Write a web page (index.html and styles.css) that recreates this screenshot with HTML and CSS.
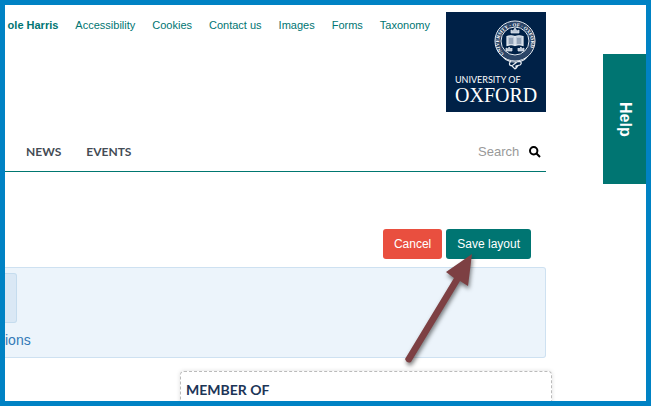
FILE: index.html
```html
<!DOCTYPE html>
<html lang="en">
<head>
<meta charset="utf-8">
<title>University of Oxford</title>
<link rel="stylesheet" href="styles.css">
</head>
<body>
<div class="frame">
  <div class="page">
    <header class="top">
      <nav class="links">
        <a class="user" href="#">ole Harris</a>
        <a href="#">Accessibility</a>
        <a href="#">Cookies</a>
        <a href="#">Contact us</a>
        <a href="#">Images</a>
        <a href="#">Forms</a>
        <a href="#">Taxonomy</a>
      </nav>
      <a class="logo" href="#">
        <svg class="crest" viewBox="0 0 44 54" aria-hidden="true">
          <defs><path id="ring" d="M11 36A16 16 0 1 1 33 36"/></defs>
          <circle cx="22" cy="23" r="17" fill="none" stroke="#2c4668" stroke-width="5"/>
          <g fill="none" stroke="#e8edf3">
            <circle cx="22" cy="23" r="20" stroke-width="1"/>
            <circle cx="22" cy="23" r="14" stroke-width="1"/>
            <path d="M10 39c3 4 7 5 12 5s9-1 12-5M18 43c-3 3-1 6 2 4l4-3c3-2 6 1 3 3l-4 1v3M19 48l3 3 3-3" stroke-width="1.200"/>
            <path d="M14 18.500q4-1.500 8 0 4-1.500 8 0v9q-4-1.500-8 0-4-1.500-8 0zM22 18.500v9" fill="#bcc8d7" stroke-width="1.200"/>
            <path d="M16 21h4M16 23h4M16 25h4M24 21h4M24 23h4M24 25h4" stroke="#4a6383" stroke-width=".7"/>
            <path d="M18 15v-3l2 1 2-3 2 3 2-1v3zM13 33v-3l2 1 1-2 2 2 1-1v3zM25 33v-3l1 1 2-2 1 2 2-1v3z" fill="#bcc8d7" stroke-width=".7"/>
          </g>
          <text class="motto"><textPath href="#ring">UNIVERSITY · OF · OXFORD</textPath></text>
        </svg>
        <span class="logo-small">UNIVERSITY OF</span>
        <span class="logo-large">OXFORD</span>
      </a>
    </header>

    <div class="menu">
      <nav class="sections">
        <a href="#">NEWS</a>
        <a href="#">EVENTS</a>
      </nav>
      <form class="search">
        <input type="text" placeholder="Search" aria-label="Search">
        <button type="button" aria-label="Submit search">
          <svg viewBox="0 0 12 12" aria-hidden="true"><circle cx="4.700" cy="4.700" r="3.700"/><path d="M7.500 7.500l3.500 3.500"/></svg>
        </button>
      </form>
    </div>

    <main>
      <div class="actions">
        <button class="btn cancel" type="button">Cancel</button>
        <button class="btn save" type="button">Save layout</button>
      </div>
      <section class="panel">
        <div class="tile"></div>
        <a href="#">ions</a>
      </section>
      <section class="member">
        <h2>MEMBER OF</h2>
      </section>
    </main>
  </div>

  <button class="help" type="button">Help</button>
  <svg class="arrow" viewBox="0 0 80 120" aria-hidden="true">
    <path d="M72 5L68 37L60 32L11 113Q7 115 5 110L54 29L46 23Z"/>
  </svg>
</div>
</body>
</html>
```
FILE: styles.css
```css
* {
  box-sizing: border-box;
}

body {
  margin: 0;
  background: #fff;
  font-family: "Liberation Sans", Arial, sans-serif;
}

a {
  color: #007572;
  text-decoration: none;
}

button {
  border: 0;
  font-family: inherit;
  cursor: pointer;
}

.frame {
  position: relative;
  height: 100vh;
  overflow: hidden;
  border: 5px solid #0082c4;
}

.page {
  padding: 7px 100px 0 0;
}

.top {
  display: flex;
  justify-content: flex-end;
  gap: 16px;
}

.links {
  display: flex;
  gap: 17px;
  padding-top: 6px;
  font-size: 11px;
  line-height: 14px;
  white-space: nowrap;
}

.user {
  font-weight: 700;
}

.logo {
  display: flex;
  flex-direction: column;
  width: 100px;
  height: 100px;
  padding: 6px 9px;
  background: #002147;
  color: #fff;
  white-space: nowrap;
}

.crest {
  align-self: flex-end;
  width: 44px;
  height: 54px;
}

.motto {
  fill: #fff;
  font: 700 5px "Liberation Serif", serif;
}

.logo-small {
  font: 9px/16px Lato, sans-serif;
}

.logo-large {
  font: 20px/14px "Liberation Serif", serif;
}

.menu {
  display: flex;
  justify-content: space-between;
  align-items: center;
  height: 60px;
  padding: 20px 5px 0 21px;
  border-bottom: 1px solid #007770;
}

.sections {
  display: flex;
  gap: 25px;
  font: 700 12px/16px Lato, sans-serif;
}

.sections a {
  color: #444c55;
}

.search {
  display: flex;
  align-items: center;
  gap: 9px;
}

.search input {
  width: 42px;
  padding: 0;
  border: 0;
  background: none;
  font: 13px/16px "Liberation Sans", Arial, sans-serif;
}

.search input::placeholder {
  color: #999;
  opacity: 1;
}

.search button {
  display: flex;
  padding: 0;
  background: none;
}

.search svg {
  width: 12px;
  height: 12px;
  fill: none;
  stroke: #000;
  stroke-width: 2;
}

.actions {
  display: flex;
  justify-content: flex-end;
  gap: 4px;
  padding: 57px 15px 8px 0;
}

.btn {
  height: 30px;
  padding: 0 11px;
  border-radius: 3px;
  color: #fff;
  font-size: 12px;
}

.cancel {
  background: #e94f3f;
}

.save {
  background: #007572;
}

.panel {
  height: 91px;
  padding-top: 5px;
  border: 1px solid #cee1f1;
  border-left: 0;
  border-radius: 0 3px 3px 0;
  background: #ecf4fb;
}

.panel a {
  display: block;
  padding-top: 8px;
  color: #337ab7;
  font-size: 14px;
  line-height: 18px;
}

.tile {
  width: 12px;
  height: 50px;
  border: 1px solid #c5dcee;
  border-left: 0;
  border-radius: 0 3px 3px 0;
  background: #dae8f5;
}

.member {
  height: 60px;
  margin: 13px -6px 0 175px;
  padding: 8px 5px;
  border: 1px dashed #bbb;
  border-radius: 4px;
  box-shadow: 0 0 4px #ddd;
}

.member h2 {
  margin: 0;
  color: #1c3557;
  font: 700 14px/20px Lato, sans-serif;
}

.help {
  position: absolute;
  top: 49px;
  right: 0;
  width: 43px;
  height: 130px;
  padding: 0;
  background: #007572;
  color: #fff;
  font-size: 16px;
  font-weight: 700;
  writing-mode: vertical-rl;
}

.arrow {
  position: absolute;
  top: 244px;
  right: 166px;
  width: 80px;
  height: 120px;
  fill: #7d4043;
  filter: drop-shadow(1px 3px 2px rgba(0, 0, 0, 0.5));
  pointer-events: none;
}
```
